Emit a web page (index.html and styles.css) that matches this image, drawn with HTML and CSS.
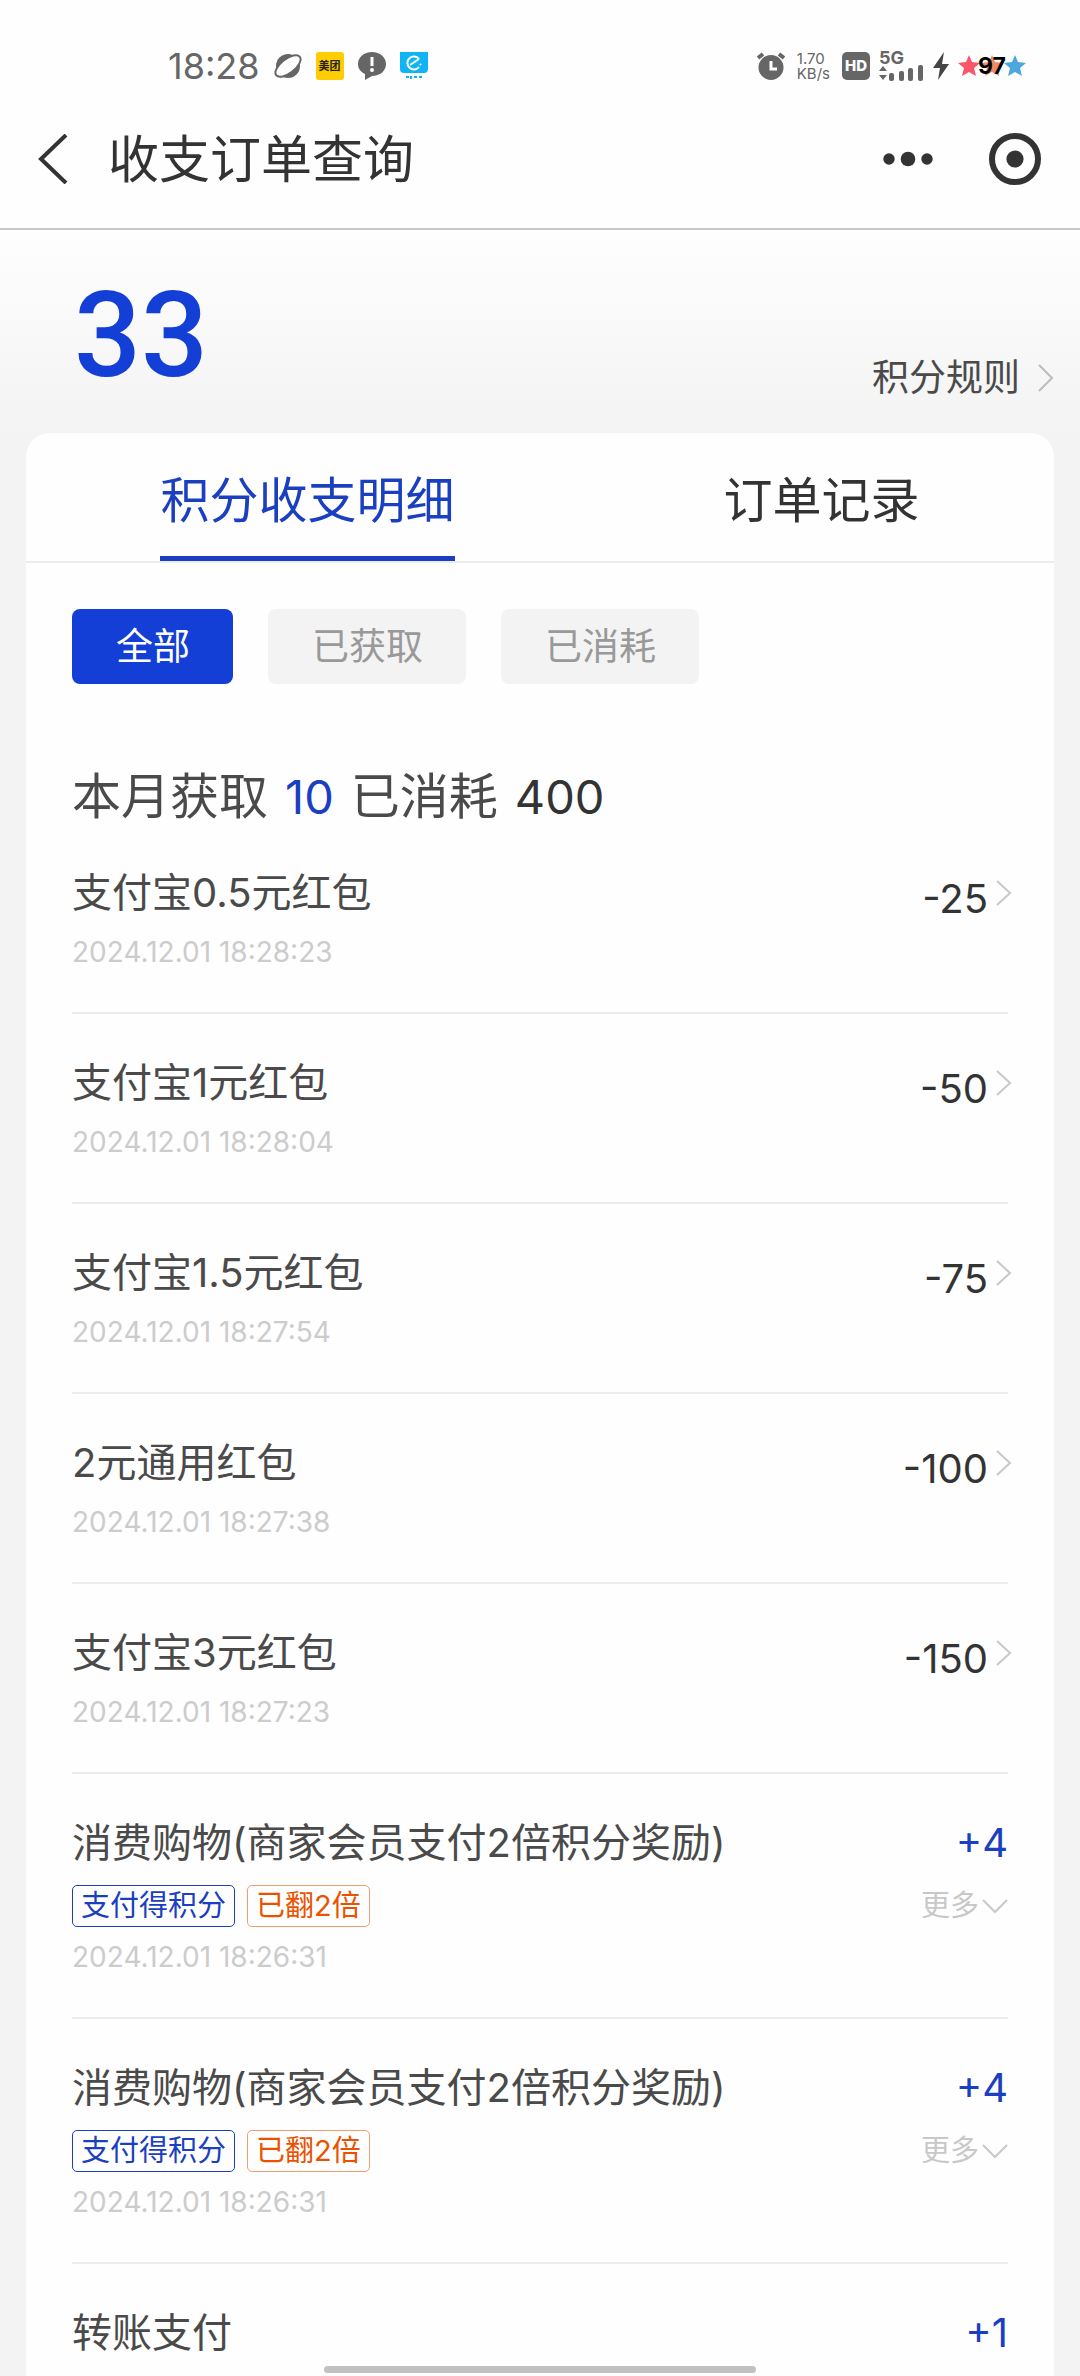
FILE: index.html
```html
<!DOCTYPE html>
<html lang="zh-CN">
<head>
<meta charset="utf-8">
<meta name="viewport" content="width=device-width, initial-scale=1">
<title>收支订单查询</title>
<link rel="stylesheet" href="styles.css">
</head>
<body>
<div class="status">
  <div class="status-group">
    <span class="clock">18:28</span>
    <svg class="icon" width="28" height="28" viewBox="0 0 28 28"><circle cx="14" cy="14" r="12" fill="#666"/><ellipse cx="14" cy="14" rx="15" ry="7" transform="rotate(-38 14 14)" fill="#fefefe" stroke="#666" stroke-width="2"/></svg>
    <span class="app-badge">美团</span>
    <svg class="icon" width="28" height="28" viewBox="0 0 28 28"><path d="M14 0C6 0 0 5 0 12c0 5 3 8 7 10v6l7-4c8 0 14-5 14-12S22 0 14 0z" fill="#666"/><path d="M14 5v9" stroke="#fff" stroke-width="3"/><circle cx="14" cy="18" r="2" fill="#fff"/></svg>
    <svg class="icon" width="28" height="28" viewBox="0 0 28 28" fill="none"><path d="M0 0h28v17q0 4-4 4H4q-4 0-4-4z" fill="#10b4f5"/><path d="M19 7a6.500 6.500 0 1 0 0 8M10 13l9-6M20 12l1 1" stroke="#fff" stroke-width="2"/><path d="M6 25h3M11 24v3M14 25h3M19 25h3" stroke="#10b4f5" stroke-width="2"/></svg>
  </div>
  <div class="status-group status-right">
    <svg class="icon alarm" width="28" height="28" viewBox="0 0 28 28"><circle cx="14" cy="15.500" r="12.500" fill="#666"/><path d="M1 6l5-4M27 6l-5-4" stroke="#666" stroke-width="4"/><path d="M14 9v8h6" fill="none" stroke="#fff" stroke-width="3"/></svg>
    <span class="speed"><span>1.70</span><span>KB/s</span></span>
    <span class="hd">HD</span>
    <span class="signal"><span class="signal-label">5G</span>
      <svg width="45" height="16" viewBox="0 0 45 16" fill="#666"><path d="M0 6l4-5 4 5zM0 10l4 5 4-5z"/><rect x="10" y="8" width="5" height="8" rx="2"/><rect x="20" y="6" width="5" height="10" rx="2"/><rect x="29" y="3" width="5" height="13" rx="2"/><rect x="39" y="0" width="5" height="16" rx="2"/></svg></span>
    <svg class="icon bolt" width="16" height="28" viewBox="0 0 16 28" fill="#444"><path d="M11 0L0 16h7L5 28l11-16H9z"/></svg>
    <span class="battery">
      <svg width="68" height="24" viewBox="0 0 68 24"><path d="M11 1l3 7 8 1-6 5 2 8-7-4-7 4 2-8-6-5 8-1z" fill="#fc5468"/><path d="M34 1l3 7 8 1-6 5 2 8-7-4-7 4 2-8-6-5 8-1z" fill="#ee8a65"/><path d="M57 1l3 7 8 1-6 5 2 8-7-4-7 4 2-8-6-5 8-1z" fill="#4ba7dd"/></svg>
      <span class="battery-level">97</span>
    </span>
  </div>
</div>

<header class="nav">
  <button class="icon-button back" aria-label="返回"><svg width="30" height="50" viewBox="0 0 30 50" fill="none" stroke="#333" stroke-width="4"><path d="M28 1L3 25l25 24"/></svg></button>
  <h1 class="nav-title">收支订单查询</h1>
  <button class="icon-button" aria-label="更多操作"><svg width="50" height="16" viewBox="0 0 50 16" fill="#333"><circle cx="6" cy="8" r="5.700"/><circle cx="25" cy="8" r="7.300"/><circle cx="44" cy="8" r="5.700"/></svg></button>
  <button class="icon-button" aria-label="关闭"><svg width="54" height="54" viewBox="0 0 54 54"><circle cx="27" cy="27" r="23" fill="none" stroke="#333" stroke-width="6"/><circle cx="27" cy="27" r="8.600" fill="#333"/></svg></button>
</header>

<section class="summary">
  <strong class="points">33</strong>
  <a class="rules" href="#rules">积分规则<svg width="16" height="28" viewBox="0 0 16 28" fill="none" stroke="#bbb" stroke-width="2"><path d="M1 1l13 13L1 27"/></svg></a>
</section>

<main class="card">
  <nav class="tabs">
    <a class="tab tab-active" href="#points">积分收支明细</a>
    <a class="tab" href="#orders">订单记录</a>
  </nav>
  <div class="content">
    <div class="filters">
      <button class="filter filter-active">全部</button>
      <button class="filter">已获取</button>
      <button class="filter">已消耗</button>
    </div>
    <h2 class="month"><span>本月获取</span><span class="num earned">10</span><span>已消耗</span><span class="num spent">400</span></h2>
    <ul class="list">
      <li><a class="row" href="#r1"><span class="info"><span class="title">支付宝0.5元红包</span><time class="date">2024.12.01 18:28:23</time></span><span class="amount">-25</span><svg class="arrow" width="16" height="26" viewBox="0 0 16 26"><path d="M1 1l13 12L1 25"/></svg></a></li>
      <li><a class="row" href="#r2"><span class="info"><span class="title">支付宝1元红包</span><time class="date">2024.12.01 18:28:04</time></span><span class="amount">-50</span><svg class="arrow" width="16" height="26" viewBox="0 0 16 26"><path d="M1 1l13 12L1 25"/></svg></a></li>
      <li><a class="row" href="#r3"><span class="info"><span class="title">支付宝1.5元红包</span><time class="date">2024.12.01 18:27:54</time></span><span class="amount">-75</span><svg class="arrow" width="16" height="26" viewBox="0 0 16 26"><path d="M1 1l13 12L1 25"/></svg></a></li>
      <li><a class="row" href="#r4"><span class="info"><span class="title">2元通用红包</span><time class="date">2024.12.01 18:27:38</time></span><span class="amount">-100</span><svg class="arrow" width="16" height="26" viewBox="0 0 16 26"><path d="M1 1l13 12L1 25"/></svg></a></li>
      <li><a class="row" href="#r5"><span class="info"><span class="title">支付宝3元红包</span><time class="date">2024.12.01 18:27:23</time></span><span class="amount">-150</span><svg class="arrow" width="16" height="26" viewBox="0 0 16 26"><path d="M1 1l13 12L1 25"/></svg></a></li>
      <li class="row"><div class="info"><span class="title">消费购物(商家会员支付2倍积分奖励)</span><span class="tags"><span class="tag">支付得积分</span><span class="tag tag-double">已翻2倍</span></span><time class="date">2024.12.01 18:26:31</time></div><div class="side"><span class="gain">+4</span><button class="more">更多<svg width="26" height="15" viewBox="0 0 26 15"><path d="M1 1l12 12L25 1"/></svg></button></div></li>
      <li class="row"><div class="info"><span class="title">消费购物(商家会员支付2倍积分奖励)</span><span class="tags"><span class="tag">支付得积分</span><span class="tag tag-double">已翻2倍</span></span><time class="date">2024.12.01 18:26:31</time></div><div class="side"><span class="gain">+4</span><button class="more">更多<svg width="26" height="15" viewBox="0 0 26 15"><path d="M1 1l12 12L25 1"/></svg></button></div></li>
      <li class="row row-last"><div class="info"><span class="title">转账支付</span></div><div class="side"><span class="gain">+1</span></div></li>
    </ul>
  </div>
</main>
<div class="home-bar"></div>
</body>
</html>
```
FILE: styles.css
```css
* { box-sizing: border-box; }

body {
  margin: 0;
  min-height: 100vh;
  display: flex;
  flex-direction: column;
  background: #f3f3f3;
  color: #4a4a4a;
  font-family: Inter, "Noto Sans CJK SC", sans-serif;
}

h1, h2, ul { margin: 0; padding: 0; font-weight: 400; }
ul { list-style: none; }
a { color: inherit; text-decoration: none; }
button { border: 0; padding: 0; background: none; color: inherit; font: inherit; }
svg { display: block; flex: none; }

.status {
  display: flex;
  justify-content: space-between;
  align-items: center;
  height: 90px;
  padding: 42px 54px 0 168px;
  background: #fefefe;
  color: #666;
}
.status-group { display: flex; align-items: center; gap: 14px; }
.status-right { gap: 9px; }
.clock { font-size: 36px; line-height: 40px; }
.app-badge {
  width: 28px;
  border-radius: 3px;
  background: #fc0;
  color: #222;
  font-size: 11px;
  font-weight: 700;
  line-height: 28px;
  text-align: center;
}
.speed { display: flex; flex-direction: column; margin: 0 3px; font-size: 15px; line-height: 15px; }
.hd {
  width: 28px;
  border-radius: 5px;
  background: #666;
  color: #fff;
  font-size: 15px;
  font-weight: 800;
  line-height: 28px;
  text-align: center;
}
.signal-label { display: block; font-size: 18px; font-weight: 700; line-height: 14px; }
.battery { position: relative; }
.battery-level {
  position: absolute;
  inset: 0;
  color: #000;
  font-size: 23px;
  font-weight: 700;
  line-height: 24px;
  text-align: center;
}

.nav {
  display: flex;
  align-items: center;
  gap: 55px;
  height: 140px;
  padding: 0 38px;
  border-bottom: 2px solid #c8c8c8;
  background: #fefefe;
}
.back { margin-right: -15px; }
.nav-title { flex: 1; padding-top: 2px; color: #333; font-size: 51px; line-height: 60px; }

.summary {
  display: flex;
  justify-content: space-between;
  align-items: flex-end;
  height: 203px;
  padding: 0 26px 29px 74px;
  background: linear-gradient(#fefefe, #f3f3f3);
}
.points { color: #133fd6; font-family: Roboto, sans-serif; font-size: 118px; font-weight: 500; line-height: 136px; }
.rules { display: flex; align-items: center; gap: 18px; font-size: 37px; line-height: 52px; }

.card {
  flex: 1;
  margin: 0 26px;
  border-radius: 24px 24px 0 0;
  background: #fefefe;
}
.tabs { display: flex; justify-content: space-around; border-bottom: 2px solid #ececec; }
.tab {
  height: 128px;
  border-bottom: 5px solid transparent;
  color: #333;
  font-size: 49px;
  line-height: 136px;
}
.tab-active { border-color: #1a3fc0; color: #1a3fc0; }

.content { padding: 46px 46px 0; }
.filters { display: flex; gap: 35px; }
.filter {
  height: 75px;
  padding: 0 43px 0 44px;
  border-radius: 8px;
  background: #f3f3f3;
  color: #999;
  font-size: 37px;
  line-height: 72px;
}
.filter-active { background: #133fd6; color: #fff; }
.month { display: flex; align-items: baseline; gap: 17px; margin-top: 86px; font-size: 49px; line-height: 54px; }
.num { color: #333; font-size: 47px; }
.earned { color: #1a3fc0; }

.row {
  display: flex;
  align-items: flex-start;
  padding: 43px 0 42px;
  border-bottom: 2px solid #ececec;
}
.row-last { border: 0; padding-bottom: 0; }
.info { display: flex; flex: 1; flex-direction: column; }
.title { font-size: 40px; line-height: 52px; }
.date { margin-top: 15px; color: #ccc; font-size: 28px; line-height: 36px; }
.amount { padding-top: 6px; color: #333; font-size: 40px; line-height: 52px; }
.arrow { margin: 13px -4px 0 8px; fill: none; stroke: #c8c8c8; stroke-width: 2; }
.tags { display: flex; gap: 12px; margin-top: 16px; }
.tags + .date { margin-top: 12px; }
.tag {
  padding: 0 8px;
  border: 1px solid #1a3fc0;
  border-radius: 5px;
  color: #1a3fc0;
  font-size: 29px;
  line-height: 40px;
}
.tag-double { border-color: #f0a070; color: #eb5200; }
.side { display: flex; flex-direction: column; align-items: flex-end; }
.gain { color: #1a3fc0; font-size: 40px; line-height: 52px; }
.more { display: flex; align-items: center; gap: 3px; margin-top: 16px; color: #c8c8c8; font-size: 29px; line-height: 42px; }
.more svg { fill: none; stroke: #c8c8c8; stroke-width: 2; }

.home-bar {
  position: fixed;
  bottom: 3px;
  left: 30%;
  right: 30%;
  height: 7px;
  border-radius: 4px;
  background: #c1c1c1;
}
```
